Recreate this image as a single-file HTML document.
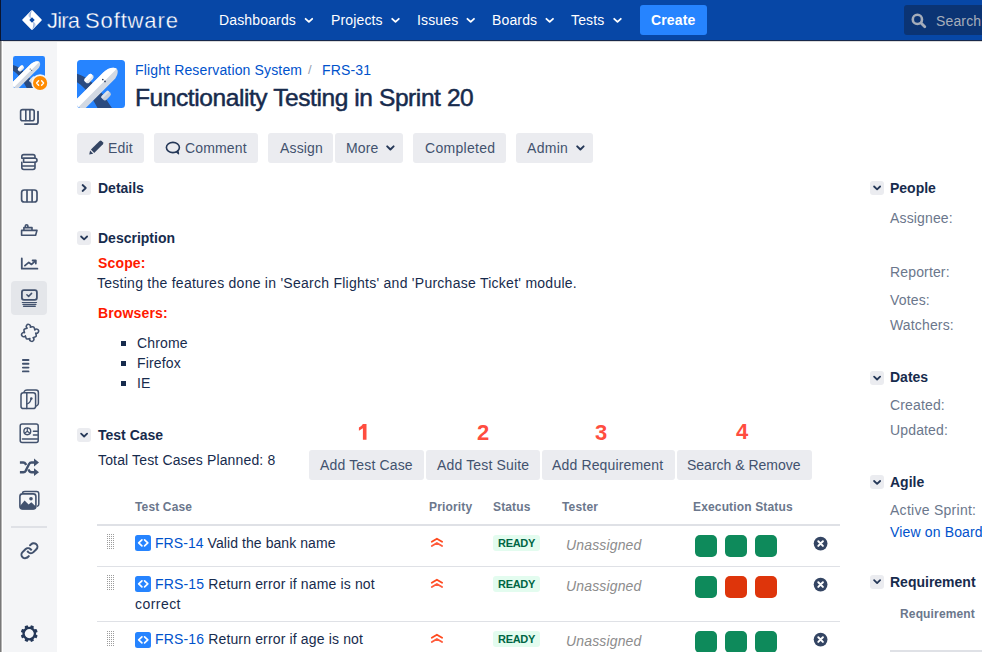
<!DOCTYPE html>
<html><head><meta charset="utf-8">
<style>
*{margin:0;padding:0;box-sizing:border-box}
html,body{width:982px;height:652px;overflow:hidden;background:#fff;font-family:"Liberation Sans",sans-serif;color:#172B4D}
.a{position:absolute}
.t{position:absolute;white-space:nowrap;font-size:14px;line-height:16px;letter-spacing:0.15px}
#nav{position:absolute;left:0;top:0;width:982px;height:41px;background:#0747A6;border-bottom:1px solid #18284a}
.ni{color:#fff}
#side{position:absolute;left:0;top:42px;width:57px;height:610px;background:#F4F5F7}
.btn{position:absolute;height:30px;background:#EBECF0;border-radius:3px}
.bt{color:#42526E}
.box{position:absolute;width:14px;height:14px;background:#EBECF0;border-radius:3px}
.hd{font-weight:bold;color:#172B4D;letter-spacing:0}
.red{color:#FF1A00;font-weight:bold}
.num{color:#FF4D3F;font-weight:bold;font-size:22px;line-height:24px}
.th{font-size:12px;line-height:14px;font-weight:bold;color:#6B778C}
.lk{color:#0052CC}
.gl{color:#6B778C}
.sq{position:absolute;width:22px;height:22px;border-radius:5px}
.g{background:#0E8A5B}
.r{background:#DE350B}
.rdy{position:absolute;height:16px;background:#E3FCEF;border-radius:3px;color:#006644;font-size:11px;font-weight:bold;line-height:16px;padding:0 5px;letter-spacing:-0.3px}
.un{font-style:italic;color:#8C8C8C}
.ln{position:absolute;height:1px;background:#DFE1E6}
</style></head><body>

<!-- NAV -->
<div id="nav">
  <svg class="a" style="left:22px;top:10px" width="20" height="20" viewBox="0 0 20 20">
    <defs><linearGradient id="lg1" gradientUnits="userSpaceOnUse" x1="9.4" y1="0" x2="5.6" y2="0"><stop offset="0" stop-color="#6a8cc8"/><stop offset="1" stop-color="#fff"/></linearGradient>
    <linearGradient id="lg2" gradientUnits="userSpaceOnUse" x1="10.6" y1="0" x2="14.4" y2="0"><stop offset="0" stop-color="#6a8cc8"/><stop offset="1" stop-color="#fff"/></linearGradient></defs>
    <path d="M10 0.3 Q10.4 0 10.8 0.4 L19.6 9.4 Q20 10 19.6 10.6 L10.8 19.6 Q10 20.2 9.2 19.6 L0.4 10.6 Q0 10 0.4 9.4 L9.2 0.4 Q9.6 0 10 0.3 Z" fill="#fff"/>
    <path d="M10 0.7 C8.7 2.2 8.4 5.2 8.7 8.6 L5.6 5.6 L5.6 5 Z" fill="url(#lg1)"/>
    <path d="M10 19.3 C11.3 17.8 11.6 14.8 11.3 11.4 L14.4 14.4 L14.4 15 Z" fill="url(#lg2)"/>
    <path d="M10 7.3 L12.7 10 L10 12.7 L7.3 10 Z" fill="#0747A6"/>
  </svg>
  <div class="t ni" style="left:47px;top:7.5px;font-size:22px;line-height:25px;letter-spacing:-0.8px;-webkit-text-stroke:0.3px #0747A6">Jira</div><div class="t ni" style="left:85px;top:7.5px;font-size:22px;line-height:25px;letter-spacing:0.87px;-webkit-text-stroke:0.3px #0747A6">Software</div>
  <div class="t ni" style="left:219px;top:12px">Dashboards</div>
  <div class="t ni" style="left:331px;top:12px">Projects</div>
  <div class="t ni" style="left:417px;top:12px">Issues</div>
  <div class="t ni" style="left:492px;top:12px">Boards</div>
  <div class="t ni" style="left:571px;top:12px">Tests</div>
  <div class="a" style="left:640px;top:5px;width:67px;height:30px;background:#2684FF;border-radius:3px"></div>
  <div class="t" style="left:651px;top:12px;color:#fff;font-weight:bold">Create</div>
  <div class="a" style="left:904px;top:5px;width:90px;height:30px;background:#0B3474;border-radius:3px"></div>
  <svg class="a" style="left:911px;top:13px" width="16" height="16" viewBox="0 0 16 16"><circle cx="6.4" cy="6.4" r="4.6" fill="none" stroke="#A5ADBA" stroke-width="2.6"/><path d="M10 10 L13.8 13.8" stroke="#A5ADBA" stroke-width="2.8" stroke-linecap="round"/></svg>
  <div class="t" style="left:936px;top:13px;color:#A5ADBA">Search</div>
</div>

<!-- SIDEBAR -->
<div id="side"></div><div class="a" style="left:0;top:41px;width:982px;height:1px;background:#dcdcdc"></div>
<div class="a" style="left:11px;top:281px;width:36px;height:34px;background:#E4E6EA;border-radius:4px"></div>
<div class="a" style="left:0;top:41px;width:1px;height:611px;background:#787878"></div><div class="a" style="left:1px;top:41px;width:1px;height:611px;background:#b4b4b4"></div><div class="a" style="left:2px;top:41px;width:1px;height:611px;background:#fff"></div><div class="a" style="left:0;top:0;width:1px;height:41px;background:#0a1530"></div>

<!-- HEADER -->
<div class="t lk" style="left:135px;top:62px">Flight Reservation System</div>
<div class="t" style="left:308px;top:61.5px;color:#97A0AF;font-size:13px">/</div>
<div class="t lk" style="left:322px;top:62px">FRS-31</div>
<div class="t" style="left:135px;top:84px;font-size:24.5px;line-height:28px;letter-spacing:-0.41px;-webkit-text-stroke:0.5px #172B4D">Functionality Testing in Sprint 20</div>

<!-- BUTTONS -->
<div class="btn" style="left:77px;top:133px;width:67px"></div>
<div class="t bt" style="left:108px;top:140px">Edit</div>
<div class="btn" style="left:154px;top:133px;width:104px"></div>
<div class="t bt" style="left:185px;top:140px">Comment</div>
<div class="btn" style="left:268px;top:133px;width:65px"></div>
<div class="t bt" style="left:280px;top:140px">Assign</div>
<div class="btn" style="left:335px;top:133px;width:68px"></div>
<div class="t bt" style="left:346px;top:140px">More</div>
<div class="btn" style="left:413px;top:133px;width:93px"></div>
<div class="t bt" style="left:425px;top:140px;letter-spacing:0.3px">Completed</div>
<div class="btn" style="left:516px;top:133px;width:77px"></div>
<div class="t bt" style="left:527px;top:140px;letter-spacing:0.3px">Admin</div>

<!-- DETAILS -->
<div class="box" style="left:77px;top:181px"></div>
<div class="t hd" style="left:98px;top:180px">Details</div>
<div class="box" style="left:77px;top:231px"></div>
<div class="t hd" style="left:98px;top:230px">Description</div>
<div class="t red" style="left:98px;top:255px">Scope:</div>
<div class="t" style="left:97px;top:275px;letter-spacing:0.26px">Testing the features done in 'Search Flights' and 'Purchase Ticket' module.</div>
<div class="t red" style="left:98px;top:305px">Browsers:</div>
<div class="a" style="left:121px;top:341px;width:5px;height:5px;background:#172B4D"></div>
<div class="t" style="left:137px;top:335px">Chrome</div>
<div class="a" style="left:121px;top:361px;width:5px;height:5px;background:#172B4D"></div>
<div class="t" style="left:137px;top:355px">Firefox</div>
<div class="a" style="left:121px;top:381px;width:5px;height:5px;background:#172B4D"></div>
<div class="t" style="left:137px;top:375px">IE</div>

<!-- TEST CASE -->
<div class="box" style="left:77px;top:428px"></div>
<div class="t hd" style="left:98px;top:427px">Test Case</div>
<div class="t" style="left:98px;top:452px">Total Test Cases Planned: 8</div>
<svg class="a" style="left:0;top:0" width="982" height="652"><path d="M362.9 423.9 H366.5 V439.8 H362.9 V428.2 L358.9 430.7 V427.6 Q361.4 426.3 362.9 423.9 Z" fill="#FF4D3F"/></svg>
<div class="t num" style="left:477px;top:421px">2</div>
<div class="t num" style="left:595px;top:421px">3</div>
<div class="t num" style="left:736px;top:420px">4</div>
<div class="btn" style="left:309px;top:450px;width:115px"></div>
<div class="t bt" style="left:320px;top:457px">Add Test Case</div>
<div class="btn" style="left:426px;top:450px;width:114px"></div>
<div class="t bt" style="left:437px;top:457px">Add Test Suite</div>
<div class="btn" style="left:542px;top:450px;width:133px"></div>
<div class="t bt" style="left:552px;top:457px">Add Requirement</div>
<div class="btn" style="left:677px;top:450px;width:135px"></div>
<div class="t bt" style="left:687px;top:457px;letter-spacing:0px">Search &amp; Remove</div>

<!-- TABLE -->
<div class="t th" style="left:135px;top:500px">Test Case</div>
<div class="t th" style="left:429px;top:500px">Priority</div>
<div class="t th" style="left:493px;top:500px">Status</div>
<div class="t th" style="left:562px;top:500px">Tester</div>
<div class="t th" style="left:693px;top:500px">Execution Status</div>
<div class="a" style="left:97px;top:524px;width:743px;height:2px;background:#DFE1E6"></div>

<div class="t" style="left:155px;top:535px;letter-spacing:0.07px"><span class="lk">FRS-14</span> Valid the bank name</div>
<div class="ln" style="left:97px;top:566px;width:743px"></div>
<div class="t" style="left:155px;top:576px"><span class="lk">FRS-15</span> Return error if name is not</div>
<div class="t" style="left:135px;top:596px;letter-spacing:0.45px">correct</div>
<div class="ln" style="left:97px;top:621px;width:743px"></div>
<div class="t" style="left:155px;top:631px"><span class="lk">FRS-16</span> Return error if age is not</div>

<div class="rdy" style="left:493px;top:535px">READY</div>
<div class="rdy" style="left:493px;top:576px">READY</div>
<div class="rdy" style="left:493px;top:631px">READY</div>
<div class="t un" style="left:566px;top:537px">Unassigned</div>
<div class="t un" style="left:566px;top:578px">Unassigned</div>
<div class="t un" style="left:566px;top:633px">Unassigned</div>

<div class="sq g" style="left:695px;top:535px"></div><div class="sq g" style="left:725px;top:535px"></div><div class="sq g" style="left:755px;top:535px"></div>
<div class="sq g" style="left:695px;top:576px"></div><div class="sq r" style="left:725px;top:576px"></div><div class="sq r" style="left:755px;top:576px"></div>
<div class="sq g" style="left:695px;top:631px"></div><div class="sq g" style="left:725px;top:631px"></div><div class="sq g" style="left:755px;top:631px"></div>

<!-- RIGHT PANEL -->
<div class="box" style="left:870px;top:181px"></div>
<div class="t hd" style="left:890px;top:180px">People</div>
<div class="t gl" style="left:890px;top:210px">Assignee:</div>
<div class="t gl" style="left:890px;top:264px">Reporter:</div>
<div class="t gl" style="left:890px;top:292px">Votes:</div>
<div class="t gl" style="left:890px;top:317px">Watchers:</div>
<div class="box" style="left:870px;top:371px"></div>
<div class="t hd" style="left:890px;top:369px">Dates</div>
<div class="t gl" style="left:890px;top:397px">Created:</div>
<div class="t gl" style="left:890px;top:422px">Updated:</div>
<div class="box" style="left:870px;top:475px"></div>
<div class="t hd" style="left:890px;top:474px">Agile</div>
<div class="t gl" style="left:890px;top:502px;letter-spacing:0.27px">Active Sprint:</div>
<div class="t lk" style="left:890px;top:524px">View on Board</div>
<div class="box" style="left:870px;top:575px"></div>
<div class="t hd" style="left:890px;top:574px">Requirement</div>
<div class="t th" style="left:900px;top:607px">Requirement</div>
<div class="a" style="left:890px;top:650px;width:92px;height:2px;background:#DFE1E6"></div>


<!-- ICON OVERLAY -->
<svg class="a" style="left:0;top:0" width="982" height="652" viewBox="0 0 982 652">
 <defs>
  <clipPath id="avc"><rect width="48" height="48" rx="3.5"/></clipPath>
  <symbol id="av" viewBox="0 0 48 48">
   <g clip-path="url(#avc)">
    <rect width="48" height="48" fill="#2684FF"/>
    <path d="M-1 13.4 C10 16 22 26 35.5 49 L21 49 C15 37 9 27.5 -1 21.6 Z" fill="#2A4B80"/>
    <path d="M-3 41.8 L26 12.8 C30 8.5 36 6.5 39.5 8.5 C41.5 10.5 41 14.5 38.3 18.4 L5.7 51 Z" fill="#D2D9E3"/>
    <path d="M-3 41.8 L26 12.8 C30 8.5 36 6.5 39.5 8.5 C39.2 9 38.8 9.6 38.3 10.2 L-0.5 49 Z" fill="#fff"/>
    <g transform="translate(12 18.6) rotate(-45)"><rect x="-5" y="-3" width="10" height="6" rx="2.6" fill="#E4E8EE"/><rect x="-5" y="-3" width="10" height="3.6" rx="2.6" fill="#fff"/></g>
    <g transform="translate(29.3 35.7) rotate(-45)"><rect x="-5" y="-3" width="10" height="6" rx="2.6" fill="#C5CDD8"/><rect x="-5" y="-3" width="10" height="2.4" rx="1.2" fill="#DCE2EA"/></g>
    <circle cx="25.8" cy="19.5" r="0.85" fill="#253858"/><circle cx="28" cy="21.4" r="0.85" fill="#253858"/>
   </g>
  </symbol>
 </defs>
 <!-- header avatar -->
 <use href="#av" x="77" y="60" width="48" height="48"/>
 <!-- sidebar avatar -->
 <use href="#av" x="13" y="56" width="32" height="32"/>
 <circle cx="40.1" cy="83" r="8.8" fill="#F4F5F7"/>
 <circle cx="40.1" cy="83" r="7.1" fill="#FF8B00"/>
 <path d="M38.6 80.8 L36.6 83 L38.6 85.2 M41.6 80.8 L43.6 83 L41.6 85.2" stroke="#fff" stroke-width="1.4" fill="none" stroke-linecap="round" stroke-linejoin="round"/>

 <g stroke="#42526E" fill="none" stroke-width="1.6" stroke-linecap="round" stroke-linejoin="round">
  <!-- boards stacked -->
  <rect x="20.6" y="109.6" width="13.6" height="11.2" rx="2"/>
  <path d="M25.8 110 V120.5 M29.9 110 V120.5"/>
  <path d="M24.9 124.1 H35.8 Q38 124.1 38 121.9 V111.6" stroke-width="1.8"/>
  <!-- backlog -->
  <path d="M21.8 158.3 V156.6 Q21.8 154.6 23.8 154.6 H33 Q35 154.6 35 156.6 V158.3 Z"/>
  <path d="M23.6 158.3 H35 Q37 158.3 37 160.25 Q37 162.2 35 162.2 H23.6 Z"/>
  <path d="M21.8 162.2 V167.6 Q21.8 169.5 23.8 169.5 H33 Q35 169.5 35 167.6 V162.2 M21.8 166 H35"/>
  <!-- board -->
  <rect x="21.6" y="190" width="15.4" height="12" rx="2.6" stroke-width="1.7"/>
  <path d="M27 190.5 V201.5 M32.1 190.5 V201.5" stroke-width="1.7"/>
  <!-- ship -->
  <path d="M25.3 227 V226 Q25.3 224.8 26.6 224.8 Q27.9 224.8 27.9 226 V227"/>
  <path d="M23.9 230 V227.6 H32 V230"/>
  <path d="M21.6 230.4 H37 L35.6 235.2 H21.6 Z"/>
  <!-- chart -->
  <path d="M21.8 258.4 V268.7 H37.4" stroke-width="1.8"/>
  <path d="M24.9 265.6 L28.8 262.4 L31.6 264.4 L35.4 260.9" stroke-width="1.8"/>
  <path d="M32.6 260.5 H35.8 V263.6" stroke-width="1.8"/>
 </g>
 <!-- selected item bg drawn in html -->
 <g stroke="#42526E" fill="none" stroke-width="1.6" stroke-linecap="round" stroke-linejoin="round">
  <!-- monitor -->
  <rect x="21.9" y="290.2" width="15" height="9.6" rx="2" stroke-width="1.8"/>
  <path d="M26.9 294.8 L28.6 296.4 L31.6 293.4" stroke-width="1.5"/>
  <path d="M22.3 302.5 H36.5 M22.9 304.4 H35.9" stroke-width="1.2"/><path d="M23.6 306.2 H35.2" stroke-width="1.5"/>
  <!-- puzzle -->
  <path transform="translate(30.1 332.9) rotate(-15) scale(0.95)" d="M-3.8 -5.6 H-1.7 A2.2 2.2 0 1 1 1.7 -5.6 H3.8 Q5.6 -5.6 5.6 -3.8 V-1.7 A2.2 2.2 0 1 1 5.6 1.7 V3.8 Q5.6 5.6 3.8 5.6 H1.7 A2.2 2.2 0 1 1 -1.7 5.6 H-3.8 Q-5.6 5.6 -5.6 3.8 V1.7 A2.2 2.2 0 1 1 -5.6 -1.7 V-3.8 Q-5.6 -5.6 -3.8 -5.6 Z" stroke-width="1.6"/>
  <!-- list -->
  <path d="M22.9 360 H28.5 M22.9 363.8 H28.5 M22.9 367.6 H28.5 M22.9 371.4 H28.5" stroke-width="1.9"/>
  <!-- pages -->
  <path d="M24.2 391.5 Q25 390 27 390 H36 Q38.4 390 38.4 392.4 V403.2 Q38.4 405.2 36.6 405.9" stroke-width="1.5"/>
  <rect x="21" y="392.8" width="14.6" height="15.8" rx="2.4" stroke-width="1.5"/>
  <path d="M26.8 393 V408.4" stroke-width="1.5"/>
  <path d="M26.9 404 Q30.6 402.5 30.9 399.2" stroke-width="1.3"/>
  <circle cx="31.3" cy="398.6" r="1.3" fill="#42526E" stroke="none"/>
  <!-- report -->
  <rect x="20.2" y="424" width="18" height="18.6" rx="2" stroke-width="1.5"/>
  <circle cx="27.3" cy="431.3" r="3.4" stroke-width="1.4"/>
  <path d="M27.3 428 V431.3 L24.6 433.2 M27.3 431.3 L30 433.2" stroke-width="1.2"/>
  <path d="M33.4 431.3 H37.5 M33.4 435 H37.5 M22.4 439 H37.5" stroke-width="1.4"/>
  <!-- shuffle -->
  <path d="M19.9 472.2 H23.4 Q24.9 472.2 25.7 470.8 L29.1 464 Q29.9 462.5 31.5 462.5 H35" stroke-width="2.4" stroke-linecap="butt"/>
  <path d="M19.9 462.5 H23.3 Q24.8 462.5 25.6 463.9 L26.1 465" stroke-width="2.4" stroke-linecap="butt"/>
  <path d="M28.4 469.4 Q29.3 472.2 31.5 472.2 H35" stroke-width="2.4" stroke-linecap="butt"/>
 </g>
 <path d="M34 458.6 L39 462.5 L34 466.4 Z M34 468.3 L39 472.2 L34 476.1 Z" fill="#42526E"/>
 <g stroke="#42526E" fill="none" stroke-linecap="round" stroke-linejoin="round">
  <!-- images -->
  <path d="M22.6 492.4 Q23.4 491.6 25 491.6 H36.6 Q38.8 491.6 38.8 493.8 V504 Q38.8 505.6 37.6 506.2" stroke-width="1.5"/>
  <rect x="19.9" y="493.9" width="16" height="15" rx="2.6" stroke-width="1.6"/>
 </g>
 <path d="M20 506 L24.6 500.6 L28.6 504.6 L31.3 502.2 L35.6 506.2 V507 Q35.6 509.6 33 509.6 H22.6 Q20 509.6 20 507 Z" fill="#42526E"/>
 <circle cx="31" cy="498.8" r="1.8" fill="#42526E"/>
 <!-- separator -->
 <rect x="11" y="526" width="36" height="2" fill="#DFE1E6"/>
 <!-- link -->
 <g fill="#42526E" transform="translate(17.45 538.2)">
  <path d="M12.856 5.457l-.937.92a1.002 1.002 0 0 0 0 1.437 1.047 1.047 0 0 0 1.463 0l.984-.966c.967-.95 2.542-1.135 3.602-.287a2.54 2.54 0 0 1 .203 3.81l-2.903 2.852a2.646 2.646 0 0 1-3.696 0l-1.11-1.09L9 13.57l1.108 1.089c1.822 1.788 4.802 1.788 6.622 0l2.905-2.852a4.558 4.558 0 0 0-.357-6.82c-1.893-1.517-4.695-1.226-6.422.47"/>
  <path d="M11.144 19.543l.937-.92a1.002 1.002 0 0 0 0-1.437 1.047 1.047 0 0 0-1.462 0l-.985.966c-.967.95-2.542 1.135-3.602.287a2.54 2.54 0 0 1-.203-3.81l2.903-2.852a2.646 2.646 0 0 1 3.696 0l1.11 1.09L15 11.43l-1.108-1.089c-1.822-1.788-4.802-1.788-6.622 0l-2.905 2.852a4.558 4.558 0 0 0 .357 6.82c1.893 1.517 4.695 1.226 6.422-.47"/>
 </g>
 <!-- gear -->
 <g transform="translate(29.25 633.6)" fill="#253858">
  <circle r="5.7" fill="none" stroke="#253858" stroke-width="2.3"/>
  <rect x="-1.7" y="-8.5" width="3.4" height="3.6" rx="0.8" transform="rotate(22.5)"/><rect x="-1.7" y="-8.5" width="3.4" height="3.6" rx="0.8" transform="rotate(67.5)"/><rect x="-1.7" y="-8.5" width="3.4" height="3.6" rx="0.8" transform="rotate(112.5)"/><rect x="-1.7" y="-8.5" width="3.4" height="3.6" rx="0.8" transform="rotate(157.5)"/><rect x="-1.7" y="-8.5" width="3.4" height="3.6" rx="0.8" transform="rotate(202.5)"/><rect x="-1.7" y="-8.5" width="3.4" height="3.6" rx="0.8" transform="rotate(247.5)"/><rect x="-1.7" y="-8.5" width="3.4" height="3.6" rx="0.8" transform="rotate(292.5)"/><rect x="-1.7" y="-8.5" width="3.4" height="3.6" rx="0.8" transform="rotate(337.5)"/>
 </g>
 <!-- chevron boxes -->
 <g stroke="#253858" fill="none" stroke-width="1.8" stroke-linecap="round" stroke-linejoin="round">
  <path d="M82.6 185 L85.8 188 L82.6 191"/>
  <path d="M81.1 236.5 L84.1 239.4 L87.1 236.5"/>
  <path d="M81.1 433.6 L84.1 436.5 L87.1 433.6"/>
  <path d="M874.1 186.5 L877.1 189.4 L880.1 186.5"/>
  <path d="M874.1 376.6 L877.1 379.5 L880.1 376.6"/>
  <path d="M874.1 481 L877.1 483.9 L880.1 481"/>
  <path d="M874.1 580.2 L877.1 583.1 L880.1 580.2"/>
  <!-- more / admin chevrons -->
  <path d="M387.2 146.4 L390.4 149.5 L393.6 146.4" stroke-width="2"/>
  <path d="M577.2 146.4 L580.4 149.5 L583.6 146.4" stroke-width="2"/>
 </g>
 <!-- nav chevrons -->
 <g stroke="#fff" fill="none" stroke-width="1.8" stroke-linecap="round" stroke-linejoin="round">
  <path d="M305.6 18.8 L308.9 21.9 L312.2 18.8"/>
  <path d="M392.2 18.8 L395.5 21.9 L398.8 18.8"/>
  <path d="M467.4 18.8 L470.7 21.9 L474 18.8"/>
  <path d="M546.4 18.8 L549.7 21.9 L553 18.8"/>
  <path d="M614.2 18.8 L617.5 21.9 L620.8 18.8"/>
 </g>
 <!-- pencil -->
 <g fill="#344563">
  <path d="M90.9 149.6 L99.6 140.9 Q100.6 139.9 101.6 140.9 L102.9 142.2 Q103.9 143.2 102.9 144.2 L94.2 152.9 Z"/>
  <path d="M90.1 150.6 L93.2 153.7 L89.2 154.6 Z"/>
 </g>
 <!-- comment -->
 <g stroke="#253858" fill="none" stroke-width="1.6">
  <ellipse cx="172.9" cy="147.5" rx="6.5" ry="5.1"/>
  <path d="M175.8 151.6 L178.6 153.9 L177.8 150.4" fill="#253858" stroke-width="1.2" stroke-linejoin="round"/>
 </g>
</svg>
<svg class="a" style="left:0;top:0" width="982" height="652" viewBox="0 0 982 652">
<defs><pattern id="dots" x="107" y="534" width="2" height="2" patternUnits="userSpaceOnUse"><rect width="1" height="1" fill="#9c9c9c"/></pattern></defs>
<g transform="translate(0 0)"><rect x="107" y="534" width="8" height="16" fill="url(#dots)"/></g>
<rect x="135" y="535" width="16" height="16" rx="2.5" fill="#2684FF"/>
<path d="M141.9 539.9 L138.7 542.9 L141.9 545.9 M144.6 539.9 L147.8 542.9 L144.6 545.9" stroke="#fff" stroke-width="1.7" fill="none" stroke-linecap="round" stroke-linejoin="round"/>
<path d="M431.8 541.8000000000001 L436.9 538.7 L442.1 541.8000000000001" stroke="#FF4A1F" stroke-width="1.8" fill="none" stroke-linecap="round" stroke-linejoin="round"/>
<path d="M431.8 546.1 L436.9 542.9000000000001 L442.1 546.1" stroke="#FF5A3A" stroke-width="1.8" fill="none" stroke-linecap="round" stroke-linejoin="round"/>
<circle cx="820.6" cy="543.6" r="6.9" fill="#344563"/>
<path d="M818.3 541.3000000000001 L822.9 545.9 M822.9 541.3000000000001 L818.3 545.9" stroke="#fff" stroke-width="2" stroke-linecap="round"/>
<g transform="translate(0 41)"><rect x="107" y="534" width="8" height="16" fill="url(#dots)"/></g>
<rect x="135" y="576" width="16" height="16" rx="2.5" fill="#2684FF"/>
<path d="M141.9 580.9 L138.7 583.9 L141.9 586.9 M144.6 580.9 L147.8 583.9 L144.6 586.9" stroke="#fff" stroke-width="1.7" fill="none" stroke-linecap="round" stroke-linejoin="round"/>
<path d="M431.8 582.8000000000001 L436.9 579.7 L442.1 582.8000000000001" stroke="#FF4A1F" stroke-width="1.8" fill="none" stroke-linecap="round" stroke-linejoin="round"/>
<path d="M431.8 587.1 L436.9 583.9000000000001 L442.1 587.1" stroke="#FF5A3A" stroke-width="1.8" fill="none" stroke-linecap="round" stroke-linejoin="round"/>
<circle cx="820.6" cy="584.6" r="6.9" fill="#344563"/>
<path d="M818.3 582.3000000000001 L822.9 586.9 M822.9 582.3000000000001 L818.3 586.9" stroke="#fff" stroke-width="2" stroke-linecap="round"/>
<g transform="translate(0 97)"><rect x="107" y="534" width="8" height="16" fill="url(#dots)"/></g>
<rect x="135" y="632" width="16" height="16" rx="2.5" fill="#2684FF"/>
<path d="M141.9 636.9 L138.7 639.9 L141.9 642.9 M144.6 636.9 L147.8 639.9 L144.6 642.9" stroke="#fff" stroke-width="1.7" fill="none" stroke-linecap="round" stroke-linejoin="round"/>
<path d="M431.8 637.8000000000001 L436.9 634.7 L442.1 637.8000000000001" stroke="#FF4A1F" stroke-width="1.8" fill="none" stroke-linecap="round" stroke-linejoin="round"/>
<path d="M431.8 642.1 L436.9 638.9000000000001 L442.1 642.1" stroke="#FF5A3A" stroke-width="1.8" fill="none" stroke-linecap="round" stroke-linejoin="round"/>
<circle cx="820.6" cy="639.6" r="6.9" fill="#344563"/>
<path d="M818.3 637.3000000000001 L822.9 641.9 M822.9 637.3000000000001 L818.3 641.9" stroke="#fff" stroke-width="2" stroke-linecap="round"/>
</svg>
</body></html>
